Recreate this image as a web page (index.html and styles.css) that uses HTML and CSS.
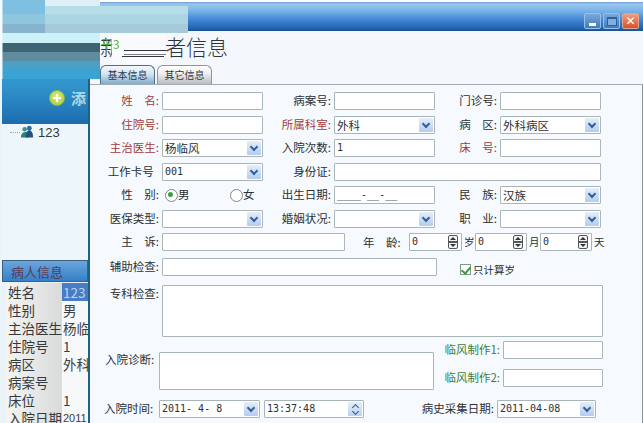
FILE: index.html
```html
<!DOCTYPE html>
<html lang="zh-CN">
<head>
<meta charset="utf-8">
<title>新增患者信息</title>
<link rel="stylesheet" href="styles.css">
</head>
<body>
<div class="desktop">
  <aside class="sidebar">
    <div class="add-area">
      <div class="add-btn"><span class="plus"></span><span class="add-text">添</span></div>
    </div>
    <div class="tree">
      <span class="tree-line"></span>
      <svg class="people" width="14" height="14" viewBox="0 0 15 14"><circle cx="5" cy="4" r="2.4" fill="#3f8f8a"/><circle cx="10" cy="3" r="2.6" fill="#2d6f9e"/><path d="M1 13c0-5 3-6 5-6s3 2 3 6z" fill="#2f7f7a"/><path d="M6 13c0-6 2-8 4-8s4 2 4 8z" fill="#24527e"/></svg>
      <span>123</span>
    </div>
    <section class="patient">
      <h2 class="patient-head">病人信息</h2>
      <table class="patient-table">
        <tr><th>姓名</th><td class="selected">123</td></tr>
        <tr><th>性别</th><td>男</td></tr>
        <tr><th>主治医生</th><td>杨临</td></tr>
        <tr><th>住院号</th><td>1</td></tr>
        <tr><th>病区</th><td>外科</td></tr>
        <tr><th>病案号</th><td></td></tr>
        <tr><th>床位</th><td>1</td></tr>
        <tr><th>入院日期</th><td class="small">2011</td></tr>
      </table>
    </section>
  </aside>

  <main class="window">
    <header class="titlebar">
      <span class="win-btn"><i class="glyph-min"></i></span>
      <span class="win-btn"><i class="glyph-max"></i></span>
      <span class="win-btn close"><i class="glyph-x">✕</i></span>
    </header>
    <div class="content">
      <h1 class="heading"><span class="heading-start">新</span><span>者信息</span></h1>
      <nav class="tabs">
        <span class="tab active">基本信息</span>
        <span class="tab">其它信息</span>
      </nav>
      <form class="panel">
        <div class="rows">
          <label class="lab red">姓　名:</label><div class="f"></div>
          <label class="lab">病案号:</label><div class="f"></div>
          <label class="lab">门诊号:</label><div class="f"></div>

          <label class="lab red">住院号:</label><div class="f"></div>
          <label class="lab red">所属科室:</label><div class="f sel">外科<b class="arrow"></b></div>
          <label class="lab">病　区:</label><div class="f sel">外科病区<b class="arrow"></b></div>

          <label class="lab red">主治医生:</label><div class="f sel">杨临风<b class="arrow"></b></div>
          <label class="lab">入院次数:</label><div class="f mono">1</div>
          <label class="lab red">床　号:</label><div class="f"></div>

          <label class="lab">工作卡号&nbsp;&nbsp;</label><div class="f sel mono">001<b class="arrow"></b></div>
          <label class="lab">身份证:</label><div class="f span3"></div>

          <label class="lab">性　别:</label>
          <div class="radios">
            <span class="radio on">男</span>
            <span class="radio">女</span>
          </div>
          <label class="lab">出生日期:</label><div class="f mono">____-__-__</div>
          <label class="lab">民　族:</label><div class="f sel">汉族<b class="arrow"></b></div>

          <label class="lab">医保类型:</label><div class="f sel"><b class="arrow"></b></div>
          <label class="lab">婚姻状况:</label><div class="f sel"><b class="arrow"></b></div>
          <label class="lab">职　业:</label><div class="f sel"><b class="arrow"></b></div>

          <label class="lab">主　诉:</label>
          <div class="age-row">
            <div class="f complaint"></div>
            <label class="age-label">年　龄:</label>
            <div class="f spin mono w53">0<b class="spinner"></b></div><span class="unit">岁</span>
            <div class="f spin mono w52">0<b class="spinner"></b></div><span class="unit">月</span>
            <div class="f spin mono w52">0<b class="spinner"></b></div><span class="unit">天</span>
          </div>

          <label class="lab">辅助检查:</label>
          <div class="aux-row">
            <div class="f aux"></div>
            <span class="check"><i class="box"></i>只计算岁</span>
          </div>

          <label class="lab">专科检查:</label>
          <div class="f exam"></div>
        </div>

        <div class="diag">
          <div class="diag-left">
            <label class="diag-label">入院诊断:</label>
            <div class="f diag-box"></div>
          </div>
          <div class="diag-right">
            <div class="green-row"><label class="lab green">临风制作1:</label><div class="f green-f"></div></div>
            <div class="green-row"><label class="lab green">临风制作2:</label><div class="f green-f"></div></div>
          </div>
        </div>

        <div class="bottom">
          <label class="bottom-label">入院时间:</label>
          <div class="f sel mono date">2011- 4- 8<b class="arrow"></b></div>
          <div class="f sel mono date time">13:37:48<b class="updown"></b></div>
          <label class="hist-label">病史采集日期:</label>
          <div class="f sel mono hist">2011-04-08<b class="arrow"></b></div>
        </div>
      </form>
    </div>
  </main>

  <div class="mask-title">
    <span class="mask-line"></span>
    <span class="mask-green">平3</span>
  </div>
  <div class="mosaic-a"></div>
  <div class="mosaic-b"></div>
</div>
</body>
</html>
```
FILE: styles.css
```css
* { box-sizing: border-box; }
html, body { margin: 0; height: 100%; overflow: hidden; background: #fff; }
body { font-family: "Noto Sans CJK SC", "Liberation Sans", sans-serif; font-size: 11.5px; color: #2c3033; }

.desktop { position: relative; width: 643px; height: 423px; overflow: hidden; filter: blur(0.4px); }

/* left column */
.sidebar { position: absolute; left: 0; top: 0; width: 88px; height: 423px; padding-left: 2px; display: flex; flex-direction: column; background: #e8f3fa; overflow: hidden; }
.add-area { height: 124px; padding-top: 90px; background: linear-gradient(#39a3d8 62px, #2f8fca 90px, #1c6cae 124px); flex: none; }
.add-btn { display: flex; align-items: center; margin-left: 47px; gap: 6px; white-space: nowrap; }
.plus { position: relative; flex: none; width: 16px; height: 16px; border-radius: 50%; background: radial-gradient(circle at 50% 40%, #e6ee7a, #9cc63a); border: 1px solid #8fbd4a; }
.plus::before { content: ""; position: absolute; left: 3px; top: 6px; width: 8px; height: 2px; background: #fff; }
.plus::after { content: ""; position: absolute; left: 6px; top: 3px; width: 2px; height: 8px; background: #fff; }
.add-text { font-size: 15px; line-height: 16px; font-weight: 700; color: #a9d9ea; }

.tree { height: 134px; padding: 0 0 0 8px; display: flex; align-items: flex-start; background: #edf6fb; font: 13px/17px "Liberation Sans", sans-serif; color: #33383c; flex: none; }
.tree-line { width: 10px; margin-top: 8px; border-top: 1px dotted #9aa8ae; }
.people { margin: 1px 4px 0 0; flex: none; }

.patient { flex: 1; background: #e9f2f7; border-top: 2px solid #eef5f9; overflow: hidden; }
.patient-head { margin: 0; height: 22px; padding-left: 8px; font-size: 13px; line-height: 21px; font-weight: 400; color: #5a3a52; background: linear-gradient(#6aa6dc, #3580c8); border: 1px solid #3d5f80; }
.patient-table { margin: 1px 0 0 4px; border-collapse: collapse; table-layout: fixed; width: 82px; font-size: 13.5px; line-height: 17px; }
.patient-table tr { height: 18px; }
.patient-table th { width: 56px; padding: 0 0 0 2px; font-weight: 400; text-align: left; white-space: nowrap; color: #35393c; background: linear-gradient(90deg, #f4f4f2, #d9dbdb); }
.patient-table td { width: 26px; padding: 0 0 0 1px; white-space: nowrap; background: #f6f8f9; color: #3a3e40; }
.patient-table td.selected { background: #4a7cc4; color: #b9d3ee; }
.patient-table td.small { font-size: 11px; font-family: "Liberation Sans", sans-serif; }

/* window */
.window { position: absolute; left: 88px; top: 2px; right: 0; bottom: 0; display: flex; flex-direction: column; border-left: 2px solid #1f6384; }
.titlebar { height: 29px; flex: none; display: flex; justify-content: flex-end; gap: 2px; padding: 11px 4px 0 0; background: linear-gradient(#6d9fd4 0, #9ac6ee 2px, #7db6ea 8px, #3f86d4 18px, #1c5aa8 28px, #18497f 29px); }
.win-btn { width: 17px; height: 16px; display: flex; align-items: center; justify-content: center; border: 1px solid #9dbfe2; border-radius: 2px; background: linear-gradient(#7aa8d8, #3d7cc0); }
.win-btn.close { background: linear-gradient(#f0a080, #d8502e); border-color: #d8a890; }
.glyph-min { width: 7px; height: 3px; margin-top: 6px; background: #fff; }
.glyph-max { width: 10px; height: 9px; border: 1px solid #2c5f9c; border-top-width: 2px; background: #7fb0dd; }
.glyph-x { font: 700 12px/14px "DejaVu Sans", sans-serif; color: #fff; }

.content { flex: 1; display: flex; flex-direction: column; min-height: 0; background: #f4f8fd; }
.heading { margin: 0; height: 34px; padding-left: 10px; display: flex; font-size: 21px; line-height: 30px; font-weight: 300; color: #2e3336; white-space: nowrap; flex: none; }
.heading-start { width: 65px; }
.tabs { height: 19px; flex: none; display: flex; gap: 2px; padding-left: 10px; }
.tab { width: 55px; height: 19px; text-align: center; font-size: 10px; line-height: 18px; color: #33383c; border: 1px solid #8c969c; border-bottom: none; border-radius: 6px 6px 0 0; background: linear-gradient(#fff, #f0f0f0 40%, #b8bec2); }
.tab.active { color: #1e3c50; border-color: #4f6f88; background: linear-gradient(#f4f8fb, #d4e4f0 45%, #7fabcc); }

.panel { flex: 1; min-height: 0; padding-top: 7px; background: #f6fafe; border-top: 1px solid #a6adb2; border-right: 1px solid #8b9298; overflow: hidden; }
.rows { display: grid; grid-template-columns: 72px 101px 71px 101px 65px 101px; grid-template-rows: 24px 23px 24px 23px 24px 23px 25px 27px 52px; }

.lab { padding-right: 3px; text-align: right; line-height: 17px; white-space: nowrap; }
.red { color: #a33a3c; }
.green { color: #3f7d3a; }
.f { height: 18px; background: #fff; border: 1px solid #a9b5b7; border-radius: 1px; padding-left: 2px; line-height: 16px; white-space: nowrap; color: #2c3033; flex: none; }
.mono { font-family: "DejaVu Sans Mono", "Liberation Mono", monospace; font-size: 10px; }
.span3 { grid-column: span 3; }

.sel { display: flex; justify-content: space-between; }
.arrow { flex: none; margin: 1px 1px 0 auto; width: 14px; height: 14px; display: flex; align-items: center; justify-content: center; background: linear-gradient(#e6eef9, #b4cced); border-radius: 1px; }
.arrow::before { content: ""; width: 4px; height: 4px; margin-top: -2px; border-right: 2px solid #2f619f; border-bottom: 2px solid #2f619f; transform: rotate(45deg); }
.updown { flex: none; margin: 1px 1px 0 auto; width: 14px; height: 14px; position: relative; background: linear-gradient(#e6eef8, #bcd2ee); }
.updown::before, .updown::after { content: ""; position: absolute; left: 5px; width: 4px; height: 4px; border-left: 1px solid #2a5a9c; border-top: 1px solid #2a5a9c; transform: rotate(45deg); }
.updown::before { top: 3px; }
.updown::after { top: 7px; transform: rotate(225deg); }

.radios { display: flex; align-items: center; height: 17px; padding-left: 3px; }
.radio { position: relative; flex: none; width: 65px; padding-left: 13px; line-height: 17px; }
.radio + .radio { width: auto; }
.radio::before { content: ""; position: absolute; left: 0; top: 3px; width: 11px; height: 11px; border-radius: 50%; border: 1px solid #7e8a90; background: #fff; }
.radio.on::after { content: ""; position: absolute; left: 3px; top: 6px; width: 5px; height: 5px; border-radius: 50%; background: #3f9a4a; }

.age-row { grid-column: span 5; display: flex; align-items: flex-start; }
.complaint { width: 183px; }
.age-label { flex: none; width: 64px; padding-left: 18px; line-height: 18px; white-space: nowrap; }
.spin { position: relative; }
.w53 { width: 53px; }
.w52 { width: 52px; }
.unit { flex: none; width: 13px; padding-left: 2px; line-height: 18px; font-size: 10.5px; }
.spinner { position: absolute; right: 3px; top: 1px; width: 10px; height: 14px; border: 1px solid #50565a; border-radius: 2px; background: linear-gradient(#f2f2f2 45%, #50565a 45%, #50565a 55%, #f2f2f2 55%); }
.spinner::before, .spinner::after { content: ""; position: absolute; left: 1px; border-left: 3px solid transparent; border-right: 3px solid transparent; }
.spinner::before { top: 1px; border-bottom: 3px solid #30363a; }
.spinner::after { bottom: 1px; border-top: 3px solid #30363a; }

.aux-row { grid-column: span 5; display: flex; align-items: flex-start; }
.aux { width: 275px; }
.check { display: flex; align-items: center; margin-left: 23px; height: 18px; padding-top: 4px; gap: 2px; font-size: 10.5px; }
.box { position: relative; width: 11px; height: 11px; border: 1px solid #7f9a80; background: #fff; }
.box::after { content: ""; position: absolute; left: 2px; top: 0; width: 4px; height: 7px; border-right: 2px solid #3f9a4a; border-bottom: 2px solid #3f9a4a; transform: rotate(40deg); }

.exam { grid-column: 2 / span 5; width: 441px; height: 52px; }

.diag { display: flex; height: 63px; padding-top: 4px; }
.diag-left { display: flex; padding-top: 11px; padding-left: 15px; }
.diag-label { flex: none; width: 54px; line-height: 14px; white-space: nowrap; }
.diag-box { width: 275px; height: 38px; }
.diag-right { display: flex; flex-direction: column; gap: 10px; }
.green-row { display: flex; }
.green-row .lab { width: 69px; }
.green-f { width: 100px; }

.bottom { display: flex; align-items: flex-start; padding-left: 14px; }
.bottom-label { flex: none; width: 55px; line-height: 16px; white-space: nowrap; }
.date { width: 101px; }
.time { margin-left: 4px; width: 100px; }
.hist-label { flex: none; width: 133px; text-align: right; padding-right: 3px; line-height: 16px; white-space: nowrap; }
.hist { width: 99px; }

/* retouched parts of the screenshot */
.mask-title { position: absolute; left: 112px; top: 34px; width: 53px; height: 30px; background: #f8fafd; }
.mask-line { position: absolute; left: 12px; top: 16px; width: 42px; height: 1px; background: #30363a; box-shadow: 0 4px 0 #7a8084, -2px 6px 0 #30363a; }
.mask-green { position: absolute; left: -11px; top: 3px; font-size: 12px; line-height: 14px; color: #58b23c; white-space: nowrap; }
.mosaic-a { position: absolute; left: 0; top: 0; width: 100px; height: 79px; background: linear-gradient(90deg, #f4fbfd 0, #f4fbfd 2px, transparent 3px, transparent 100%), linear-gradient(#7fc0e2 0 14px, #8ec6e0 14px 24px, #86b4cf 24px 33px, #cdf1f8 33px 43px, #3e6474 43px 52px, #5f8c9e 52px 61px, #4aa0c6 61px 70px, #3ba2d4 70px 79px); }
.mosaic-b { position: absolute; left: 45px; top: 0; width: 143px; height: 43px; background: linear-gradient(#ddf0f6 0 6px, #b7dde9 6px 14px, #acd5e3 14px 24px, #a5cbdb 24px 33px, #cdf1f8 33px 43px); clip-path: polygon(0 0, 55px 0, 55px 6px, 143px 6px, 143px 33px, 55px 33px, 55px 43px, 0 43px); }
```
